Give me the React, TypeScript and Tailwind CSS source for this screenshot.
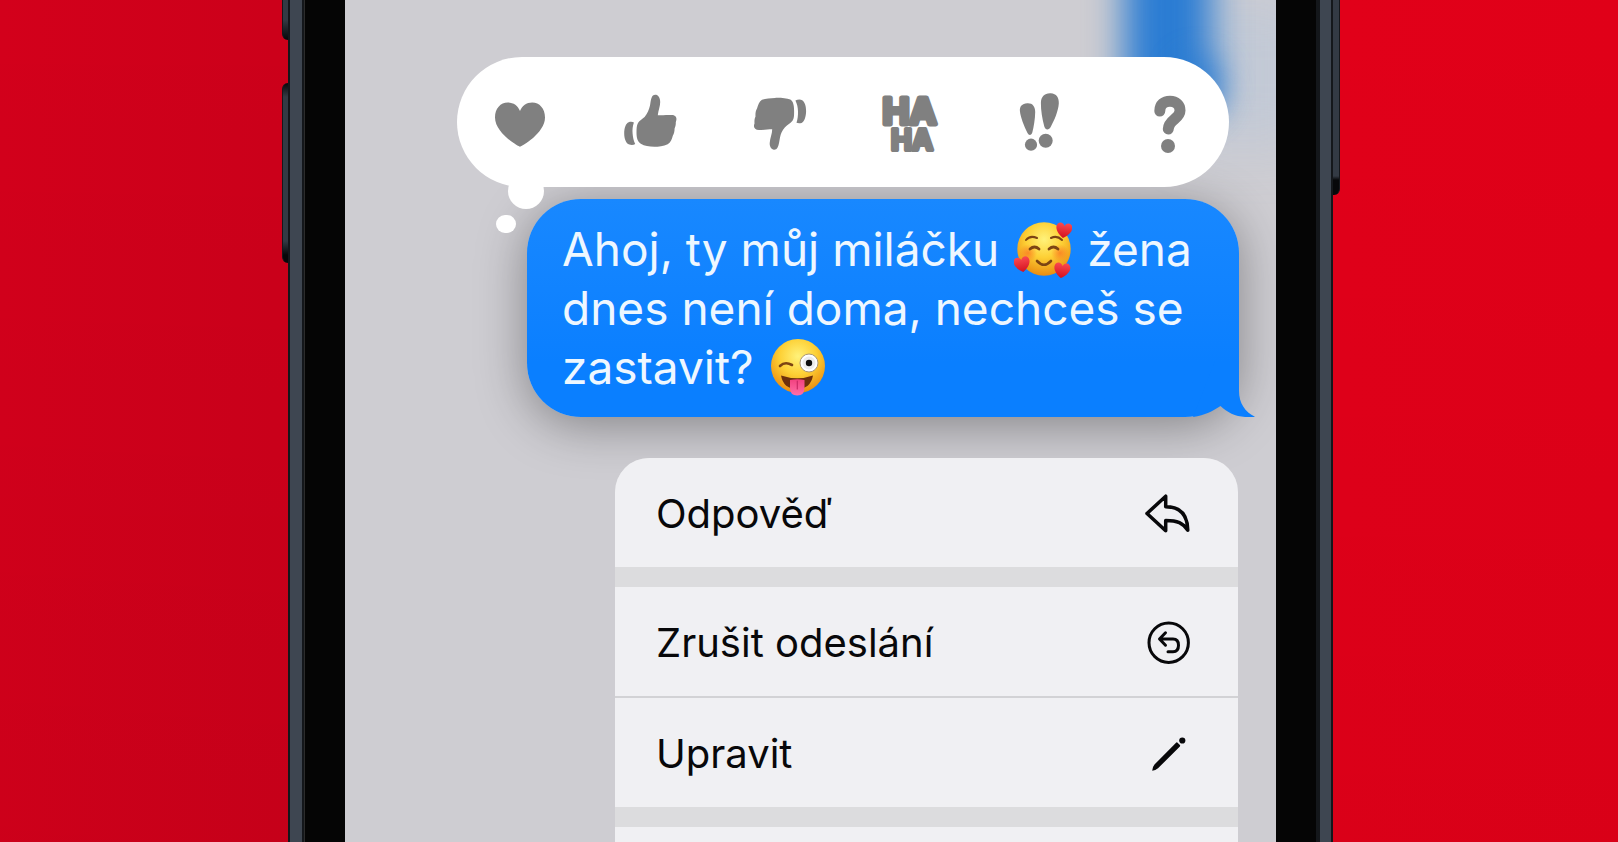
import React from "react";

function Heart() {
  return (
    <svg viewBox="0 0 60 60" className="size-[60px] fill-[#808080]" aria-hidden="true">
      <path d="M30 54.7C28.5 54.7 5 41 5 25.5C5 16.5 10.500 10.500 17.800 10.500C23.500 10.500 28 13.800 30 19C32 13.800 36.500 10.500 42.200 10.500C49.500 10.500 55 16.500 55 25.500C55 41 31.500 54.700 30 54.700Z" />
    </svg>
  );
}

function ThumbUp() {
  return (
    <svg viewBox="0 0 60 60" className="size-[60px] fill-[#808080]" aria-hidden="true">
      <path d="M35.300 2.800C38 2.800 40.200 5.500 40.200 10C40.200 14.500 38.300 18.500 37.800 23.300C42 23.300 48 22.700 52.500 23.100C56.500 23.700 57.200 26.800 55.800 30.200C55.900 32.500 55.500 34.500 54.600 36.500C54.600 39.500 54 41.800 52.800 43.800C51.800 47.500 50.600 50.800 47.700 52.200C43.500 54.400 38.500 54.800 34.300 54.800C29 54.800 24.500 54 20.800 51.800C17.400 49.500 16.500 45.500 16.500 40.500C16.500 36.500 16.600 33.500 18 30.900C19.500 28.300 22 27.500 24.600 25C27.500 21.500 29 17.500 30 13.500C30.600 10 30.700 8.200 31.500 6C32.200 4 33.400 2.800 35.300 2.800Z" />
      <path d="M8.700 30.200C10.500 29.600 12.800 29.800 13.900 30.400C12.600 34 12.300 37.500 12.600 41.500C12.900 45.500 13.600 48.500 15.200 52C13.800 53 11.500 53.200 9.300 52.600C6 51.500 4.200 46.800 4.200 41.500C4.200 36 5.800 31.300 8.700 30.200Z" />
    </svg>
  );
}

function ThumbDown() {
  return (
    <svg viewBox="0 0 60 60" className="size-[60px] fill-[#808080]" aria-hidden="true">
      <path d="M25 5.900C31 5.700 36.500 6.400 40.300 7.600C43.200 9.500 44.100 13 44.100 19C44.100 23 44.200 26.500 42.500 28.800C40.500 31.500 37.500 32.500 35 35.300C32 38.800 30.800 41.500 30 45.500C29.300 49.500 29 52.500 27.700 55.300C26.700 57.200 25.400 57.900 24 57.800C21.200 57.500 19.500 54.500 19.700 51C20 46 22.200 42 22.200 37.200C18 37.200 14 38 9 38C4.500 37.800 3 35 4.500 31.500C4.300 29 4.500 26.500 5.500 24.500C5.300 21.500 5.600 18.800 7 16.500C8.200 12.500 9.300 9.500 12 7.800C15.800 6.400 20.500 6 25 5.900Z" />
      <path d="M45.400 8.500C47.500 7.500 50.500 7.200 52.200 8.300C54.800 10 56.200 14.500 56.100 19.300C56 24.500 54.600 29.500 51.600 30.900C49.700 31.500 47.700 31.300 46.500 30.800C47.600 27.500 48.100 23.500 48 19.500C47.900 15.500 47.200 12 45.400 8.500Z" />
    </svg>
  );
}

function Haha() {
  return (
    <svg
      viewBox="0 0 60 60"
      className="size-[60px] overflow-visible fill-[#808080] stroke-[#808080] font-['Inter',sans-serif] font-bold"
      strokeLinejoin="round"
      textAnchor="middle"
      aria-hidden="true"
    >
      <text x="30.500" y="32" fontSize="36" strokeWidth="5">HA</text>
      <text x="33" y="58" fontSize="28" strokeWidth="4">HA</text>
    </svg>
  );
}

function Emphasis() {
  return (
    <svg viewBox="0 0 60 60" className="size-[60px] fill-[#808080]" aria-hidden="true">
      <path d="M18.300 11.300C23.500 11 26.300 14.500 26.200 20C26.100 27 24.800 35 23.300 40.500C22.500 43.500 19.800 43.700 18.500 41C15 34 11.500 25 10.900 19C10.500 14.500 13 11.600 18.300 11.300Z" />
      <circle cx="22" cy="52.700" r="6.100" />
      <path d="M41.700 1.300C47.500 1.700 50.100 5.500 49.800 11.500C49.300 19 45.500 28 41.800 34.700C39.800 38.500 36.500 38.300 35.300 34.500C33.300 27.500 31.800 18 31.900 11C32 4.500 35.700 1 41.700 1.300Z" />
      <circle cx="36.700" cy="48.700" r="7" />
    </svg>
  );
}

function Question() {
  return (
    <svg viewBox="0 0 60 60" className="size-[60px] overflow-visible fill-[#808080]" aria-hidden="true">
      <path
        d="M20.800 19C20.800 12.500 25 9.300 31 9.300C37 9.300 41 12.800 41 18.500C41 27 29.500 27.500 29.300 37"
        className="fill-none stroke-[#808080]"
        strokeWidth="11"
        strokeLinecap="round"
      />
      <circle cx="29" cy="54" r="7" />
    </svg>
  );
}

function SmallHeart({ x, y, turn }: { x: number; y: number; turn: number }) {
  return (
    <path
      transform={`translate(${x} ${y}) rotate(${turn})`}
      d="M0 8C-3 6.500 -8 2 -8 -2.500C-8 -7.500 -2 -9 0 -4C2 -9 8 -7.500 8 -2.500C8 2 3 6.500 0 8Z"
      fill="url(#heartRed)"
    />
  );
}

function HeartsFace() {
  return (
    <svg viewBox="0 0 58 58" className="mx-0.5 inline-block size-[58px] align-[-13px]" role="img" aria-label="🥰">
      <defs>
        <radialGradient id="faceA" cx="0.5" cy="0.32" r="0.68">
          <stop offset="0" stopColor="#fff27a" />
          <stop offset="0.500" stopColor="#fdd035" />
          <stop offset="1" stopColor="#ea8c10" />
        </radialGradient>
        <radialGradient id="blush">
          <stop offset="0" stopColor="#fb6a22" stopOpacity="0.650" />
          <stop offset="1" stopColor="#fb6a22" stopOpacity="0" />
        </radialGradient>
        <linearGradient id="heartRed" x1="0" y1="0" x2="0" y2="1">
          <stop offset="0" stopColor="#fb4a50" />
          <stop offset="1" stopColor="#d3101f" />
        </linearGradient>
      </defs>
      <circle cx="30" cy="28" r="26.700" fill="url(#faceA)" />
      <circle cx="14" cy="32" r="9" fill="url(#blush)" />
      <circle cx="46" cy="32" r="9" fill="url(#blush)" />
      <g fill="none" stroke="#7c4413" strokeLinecap="round">
        <path d="M12 19Q16 14 23 17" strokeWidth="2" />
        <path d="M37 17Q43 14 48 19" strokeWidth="2" />
        <path d="M16 28Q20.500 24 25 28" strokeWidth="2.800" />
        <path d="M35 28Q39.500 24 44 28" strokeWidth="2.800" />
        <path d="M23 40Q30 47.500 37 40" strokeWidth="2.600" />
      </g>
      <SmallHeart x={50} y={9} turn={8} />
      <SmallHeart x={8} y={43} turn={-10} />
      <SmallHeart x={48} y={49} turn={8} />
    </svg>
  );
}

function WinkFace() {
  return (
    <svg viewBox="0 0 58 58" className="mx-0.5 inline-block size-[58px] align-[-13px]" role="img" aria-label="😜">
      <defs>
        <radialGradient id="faceB" cx="0.5" cy="0.32" r="0.68">
          <stop offset="0" stopColor="#fff27a" />
          <stop offset="0.500" stopColor="#fdd035" />
          <stop offset="1" stopColor="#ea8c10" />
        </radialGradient>
        <linearGradient id="tongue" x1="0" y1="0" x2="0" y2="1">
          <stop offset="0" stopColor="#f2417f" />
          <stop offset="1" stopColor="#ff6fa8" />
        </linearGradient>
      </defs>
      <circle cx="30" cy="27" r="27" fill="url(#faceB)" />
      <path d="M12 27Q17 22 24 26" fill="none" stroke="#7c4413" strokeWidth="2.600" strokeLinecap="round" />
      <circle cx="41" cy="24" r="9" fill="#fff" stroke="#a9967a" strokeWidth="1" />
      <circle cx="41" cy="24" r="6.500" fill="#ececec" />
      <circle cx="41" cy="24" r="3.200" fill="#0d0d0d" />
      <path d="M13 36.500Q29.500 42 45 36.500Q42.500 50 29 50Q15.500 50 13 36.500Z" fill="#6d2f0c" />
      <path d="M22 41Q29.500 39.500 36.500 41V49Q36.500 56.500 29.200 56.500Q22 56.500 22 49Z" fill="url(#tongue)" />
      <path d="M29.300 42V50" stroke="#c92a66" strokeWidth="1.200" strokeLinecap="round" />
    </svg>
  );
}

function ReplyIcon() {
  return (
    <svg
      viewBox="0 0 48 48"
      className="size-12 fill-none stroke-[#08080a]"
      strokeWidth="3.500"
      strokeLinejoin="round"
      aria-hidden="true"
    >
      <path d="M3 24.500L21.700 7.200V17.700C36 17.700 43.500 25 43.800 41.300C39 34 33.500 31.500 21.700 31.500V41.700Z" />
    </svg>
  );
}

function UndoIcon() {
  return (
    <svg
      viewBox="0 0 48 48"
      className="size-12 fill-none stroke-[#08080a]"
      strokeWidth="3"
      strokeLinecap="round"
      strokeLinejoin="round"
      aria-hidden="true"
    >
      <circle cx="24.700" cy="24.700" r="19.700" />
      <path d="M21.500 14.800L15.500 21L21.500 27.200M15.800 21H29Q34.500 21 34.500 27.300Q34.500 33.800 29 33.800H24" />
    </svg>
  );
}

function PencilIcon() {
  return (
    <svg viewBox="0 0 48 48" className="size-12 fill-[#08080a]" aria-hidden="true">
      <path d="M8.200 41.800Q8.300 38 10.500 35.500L32.300 13.600Q33 13.100 33.600 13.700L35.900 16Q36.500 16.800 35.900 17.500L14 39.300Q11.500 41.500 8.200 41.800Z" />
      <circle cx="38.300" cy="11.500" r="3.100" />
    </svg>
  );
}

const reactions = [
  { name: "To se mi líbí moc", Icon: Heart },
  { name: "Palec nahoru", Icon: ThumbUp },
  { name: "Palec dolů", Icon: ThumbDown },
  { name: "Haha", Icon: Haha },
  { name: "Důraz", Icon: Emphasis },
  { name: "Otázka", Icon: Question },
];

function MenuItem({ label, children }: { label: string; children: React.ReactNode }) {
  return (
    <button
      type="button"
      className="flex h-[109px] w-full shrink-0 items-center justify-between bg-[#f0f0f3] pr-[46px] pl-[41px] text-left text-[40px] text-[#08080a]"
    >
      <span className="pt-0.5">{label}</span>
      {children}
    </button>
  );
}

function Screen() {
  return (
    <main className="relative flex min-w-0 flex-1 flex-col overflow-hidden bg-[#cecdd2] pt-[57px]">
      <div className="absolute top-0 -right-8 h-36 w-32 bg-[#9fbfe4]/25 blur-[28px]" />
      <div className="absolute -top-24 right-[64px] h-52 w-[88px] rounded-3xl bg-[#2a7cd3] blur-[18px]" />
      <div className="absolute top-14 right-[52px] h-16 w-12 rounded-full bg-[#2378d2]/60 blur-[14px]" />

      <div className="relative z-10 mr-[47px] ml-28">
        <div className="flex h-[130px] items-center justify-between rounded-full bg-white pr-[30px] pl-[33px]">
          {reactions.map(({ name, Icon }) => (
            <button key={name} type="button" aria-label={name}>
              <Icon />
            </button>
          ))}
        </div>
        <span className="absolute top-[116px] left-[51px] size-9 rounded-full bg-white" />
        <span className="absolute top-[158px] left-[39px] h-[18px] w-5 rounded-full bg-white" />
      </div>

      <div className="relative mt-3 mr-[37px] ml-[182px] rounded-[54px] bg-linear-to-b from-[#1888ff] to-[#0a7fff] to-75% px-[35px] pt-[21px] pb-5 shadow-[0_8px_50px_rgba(0,0,0,0.36)]">
        <p className="text-[46px] leading-[59px] text-[#eef7ff]">
          Ahoj, ty můj miláčku <HeartsFace /> žena dnes není doma, nechceš se zastavit? <WinkFace />
        </p>
        <svg viewBox="0 4 80 56" className="absolute -right-4 bottom-0 h-14 w-20" aria-hidden="true">
          <path d="M40 4H64V34C64 46 70 55 80 59.700C66 61.500 54 57.500 45.500 49C38 54 30 58 18 60Z" fill="#0a7fff" />
        </svg>
      </div>

      <nav className="relative mt-[41px] mr-[38px] ml-[270px] flex flex-col overflow-hidden rounded-t-[34px] bg-[#dcdcde]">
        <MenuItem label="Odpověď">
          <ReplyIcon />
        </MenuItem>
        <div className="mt-5 flex flex-col gap-0.5 bg-[#d2d2d5]">
          <MenuItem label="Zrušit odeslání">
            <UndoIcon />
          </MenuItem>
          <MenuItem label="Upravit">
            <PencilIcon />
          </MenuItem>
        </div>
        <div className="mt-5 h-20 bg-[#f0f0f3]" />
      </nav>
    </main>
  );
}

export default function App() {
  return (
    <div className="flex h-screen justify-center overflow-hidden bg-[linear-gradient(to_bottom,transparent,rgba(0,0,0,0.03)),linear-gradient(to_right,#d3001b,#cc001a_17%,#e10019_83%,#e00018)] pl-[3px] font-['Inter',sans-serif]">
      <div className="relative flex w-full max-w-[1045px] bg-[#050505]">
        <div className="absolute top-0 -left-[6px] h-10 w-2 rounded-bl-md border-l border-[#15181c] bg-linear-to-b from-[#333a44] from-50% to-[#07080a]" />
        <div className="absolute top-[83px] -left-[6px] h-[180px] w-2 rounded-l-md border-l border-[#15181c] bg-[linear-gradient(to_bottom,#07080a,#333a44_14px,#333a44_158px,#07080a_172px)]" />
        <div className="absolute top-0 -right-[7px] h-[195px] w-2 rounded-br-md border-r border-[#15181c] bg-[linear-gradient(to_bottom,#333a44_176px,#07080a_180px)]" />
        <div className="relative w-4 border-x-2 border-[#14171b] bg-[#3e4651]" />
        <div className="w-[41px] border-l border-[#2c2c2c] bg-[#050505]" />
        <Screen />
        <div className="w-10 bg-[#050505]" />
        <div className="relative w-[17px] border-r-2 border-l-4 border-[#14171b] bg-[#3e4651]" />
      </div>
    </div>
  );
}
